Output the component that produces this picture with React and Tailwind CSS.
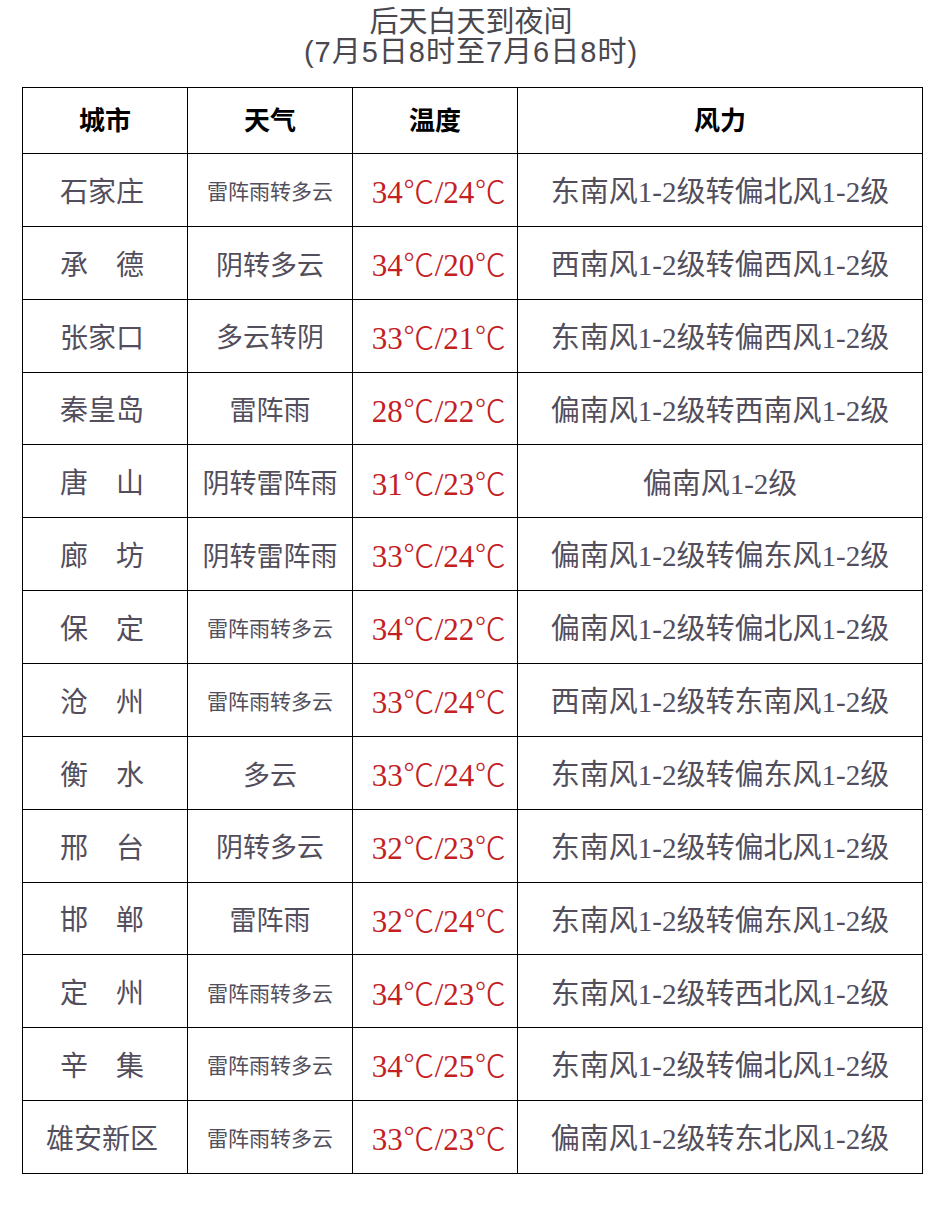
import React from "react";

const rows = [
  ["石家庄", "雷阵雨转多云", "34", "24", "东南风1-2级转偏北风1-2级"],
  ["承\u3000德", "阴转多云", "34", "20", "西南风1-2级转偏西风1-2级"],
  ["张家口", "多云转阴", "33", "21", "东南风1-2级转偏西风1-2级"],
  ["秦皇岛", "雷阵雨", "28", "22", "偏南风1-2级转西南风1-2级"],
  ["唐\u3000山", "阴转雷阵雨", "31", "23", "偏南风1-2级"],
  ["廊\u3000坊", "阴转雷阵雨", "33", "24", "偏南风1-2级转偏东风1-2级"],
  ["保\u3000定", "雷阵雨转多云", "34", "22", "偏南风1-2级转偏北风1-2级"],
  ["沧\u3000州", "雷阵雨转多云", "33", "24", "西南风1-2级转东南风1-2级"],
  ["衡\u3000水", "多云", "33", "24", "东南风1-2级转偏东风1-2级"],
  ["邢\u3000台", "阴转多云", "32", "23", "东南风1-2级转偏北风1-2级"],
  ["邯\u3000郸", "雷阵雨", "32", "24", "东南风1-2级转偏东风1-2级"],
  ["定\u3000州", "雷阵雨转多云", "34", "23", "东南风1-2级转西北风1-2级"],
  ["辛\u3000集", "雷阵雨转多云", "34", "25", "东南风1-2级转偏北风1-2级"],
  ["雄安新区", "雷阵雨转多云", "33", "23", "偏南风1-2级转东北风1-2级"],
];

const cell = "flex items-center justify-center border-r border-b border-black";
const deg =
  "inline-block w-[32px] text-center font-['Noto_Sans_CJK_SC',sans-serif] font-light text-[31px]";

export default function App() {
  return (
    <div className="w-[942px] h-[1218px] bg-white font-['Liberation_Serif','Noto_Sans_CJK_SC',serif]">
      <div className="pt-[7px] flex flex-col items-center text-[29px] leading-[30px] text-[#4a484e] font-['Liberation_Sans','Noto_Sans_CJK_SC',sans-serif]">
        <div>后天白天到夜间</div>
        <div className="tracking-[1px]">(7月5日8时至7月6日8时)</div>
      </div>
      <div className="ml-[22px] mt-[20px] w-[901px] h-[1087px] border-t border-l border-black grid grid-cols-[165px_165px_165px_405px] grid-rows-[66px_repeat(14,1fr)]">
        {["城市", "天气", "温度", "风力"].map((h) => (
          <div key={h} className={`${cell} pt-[2px] text-[26px] font-bold text-black`}>
            {h}
          </div>
        ))}
        {rows.map(([city, weather, hi, lo, wind]) => (
          <React.Fragment key={city}>
            <div className={`${cell} pt-[6px] pr-[6px] text-[28px] text-[#524e5c]`}>{city}</div>
            <div
              className={`${cell} pt-[6px] text-[#524e5c] ${
                weather.length >= 6 ? "text-[21px]" : "text-[27px]"
              }`}
            >
              {weather}
            </div>
            <div className={`${cell} pt-[4px] pl-[8px] text-[31px] text-[#c4201f]`}>
              <span className="whitespace-nowrap">
                {hi}
                <span className={deg}>℃</span>/{lo}
                <span className={deg}>℃</span>
              </span>
            </div>
            <div className={`${cell} pt-[6px] text-[29px] text-[#524e5c]`}>{wind}</div>
          </React.Fragment>
        ))}
      </div>
    </div>
  );
}
